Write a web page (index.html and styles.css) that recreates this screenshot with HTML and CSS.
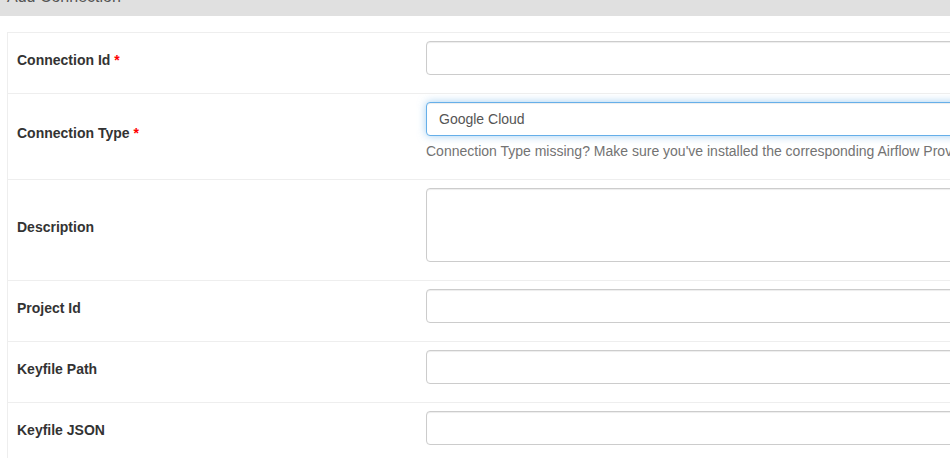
FILE: index.html
```html
<!DOCTYPE html>
<html>
<head>
<meta charset="utf-8">
<link rel="stylesheet" href="styles.css">
</head>
<body>
<div class="page">
  <div class="panel-heading">Add Connection</div>
  <div class="panel-body">
    <table class="form-table">
      <tr>
        <td class="col-label"><label>Connection Id <strong class="req">*</strong></label></td>
        <td class="col-field"><input class="form-control" type="text"><span class="help-block"></span></td>
      </tr>
      <tr>
        <td class="col-label"><label>Connection Type <strong class="req">*</strong></label></td>
        <td class="col-field"><div class="form-control focused">Google Cloud</div><span class="help-block">Connection Type missing? Make sure you've installed the corresponding Airflow Provider Package.</span></td>
      </tr>
      <tr>
        <td class="col-label"><label>Description</label></td>
        <td class="col-field"><textarea class="form-control textarea" rows="3"></textarea><span class="help-block"></span></td>
      </tr>
      <tr>
        <td class="col-label"><label>Project Id</label></td>
        <td class="col-field"><input class="form-control" type="text"><span class="help-block"></span></td>
      </tr>
      <tr>
        <td class="col-label"><label>Keyfile Path</label></td>
        <td class="col-field"><input class="form-control" type="text"><span class="help-block"></span></td>
      </tr>
      <tr>
        <td class="col-label"><label>Keyfile JSON</label></td>
        <td class="col-field"><input class="form-control" type="text"><span class="help-block"></span></td>
      </tr>
    </table>
  </div>
</div>
</body>
</html>
```

FILE: styles.css
```css
html, body {
  margin: 0;
  padding: 0;
  background: #fff;
  overflow: hidden;
}
body {
  font-family: "Liberation Sans", Arial, sans-serif;
  font-size: 14px;
  line-height: 20px;
  color: #333;
}
.page {
  margin-top: -22px;
}
.panel-heading {
  background: #e0e0e0;
  color: #555;
  font-size: 16px;
  line-height: 18px;
  padding: 10px 7px;
}
.panel-body {
  padding: 16px 0 0 7px;
}
.form-table {
  border-collapse: collapse;
  width: 1300px;
  border-left: 1px solid #eee;
  border-top: 1px solid #eee;
}
.form-table td {
  padding: 8px;
  border-top: 1px solid #eee;
}
.form-table td.col-label {
  width: 393px;
  padding-left: 9px;
  vertical-align: middle;
}
.col-field {
  vertical-align: top;
}
label {
  display: inline-block;
  margin-bottom: 7px;
  font-weight: bold;
  color: #333;
}
.req {
  color: red;
}
.form-control {
  display: block;
  box-sizing: border-box;
  width: 100%;
  height: 34px;
  margin: 0;
  padding: 6px 12px;
  font-family: "Liberation Sans", Arial, sans-serif;
  font-size: 14px;
  line-height: 20px;
  color: #555;
  background: #fff;
  border: 1px solid #ccc;
  border-radius: 4px;
  box-shadow: inset 0 1px 1px rgba(0,0,0,.075);
}
.form-control.focused {
  border-color: #66afe9;
  box-shadow: inset 0 1px 1px rgba(0,0,0,.075), 0 0 8px rgba(102,175,233,.6);
}
.textarea {
  height: 74px;
  resize: none;
}
.help-block {
  display: block;
  margin-top: 5px;
  margin-bottom: 10px;
  color: #737373;
  white-space: nowrap;
}
```
